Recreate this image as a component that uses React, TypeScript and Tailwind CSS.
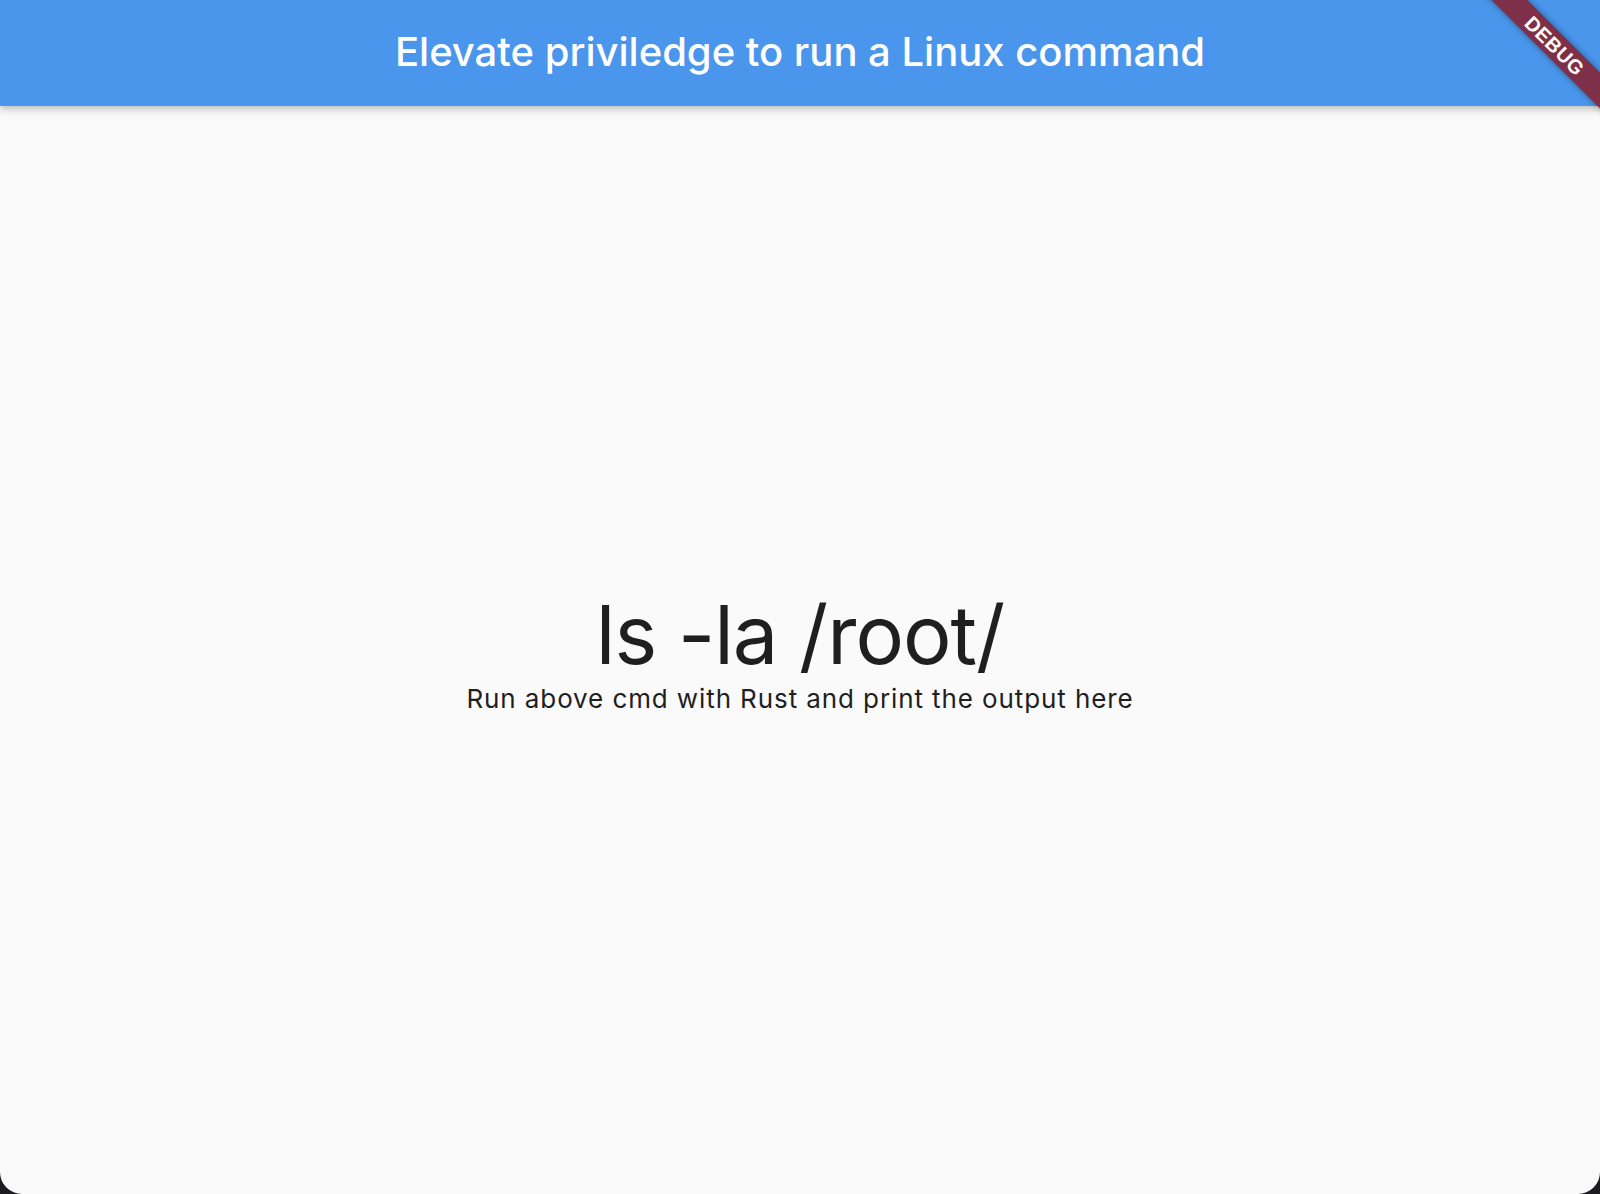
export default function App() {
  return (
    <div className="h-[1194px] w-full bg-[#1c1c1e]" style={{ fontFamily: "Inter, 'Noto Sans', sans-serif" }}>
      <div className="relative flex h-full w-full flex-col overflow-hidden rounded-b-[22px] bg-[#fafafa]">
        {/* app bar */}
        <header className="z-10 flex h-[106px] shrink-0 items-center justify-center bg-[#4a96ec] shadow-[0_3px_8px_rgba(0,0,0,0.25)]">
          <h1 className="pb-[2px] text-[40px] font-medium text-white">
            Elevate priviledge to run a Linux command
          </h1>
        </header>

        {/* body */}
        <main className="flex flex-1 flex-col items-center justify-center text-[#1f1f1f]">
          <div className="text-[81px] leading-[1.21] tracking-[-1px]">ls -la /root/</div>
          <div className="text-[26px] leading-[1.12] tracking-[0.9px]">Run above cmd with Rust and print the output here</div>
        </main>

        {/* debug banner */}
        <div className="pointer-events-none absolute right-0 top-0 z-20 h-[150px] w-[150px] overflow-hidden">
          <div className="absolute left-[5px] top-[33px] flex h-[25px] w-[200px] rotate-45 items-center justify-center bg-[#7f3049] shadow-[0_0_6px_rgba(0,0,0,0.45)]">
            <span className="text-[20px] font-black leading-none tracking-[0.5px] text-white" style={{ fontFamily: "'Liberation Sans', Arial, sans-serif" }}>
              DEBUG
            </span>
          </div>
        </div>
      </div>
    </div>
  );
}
